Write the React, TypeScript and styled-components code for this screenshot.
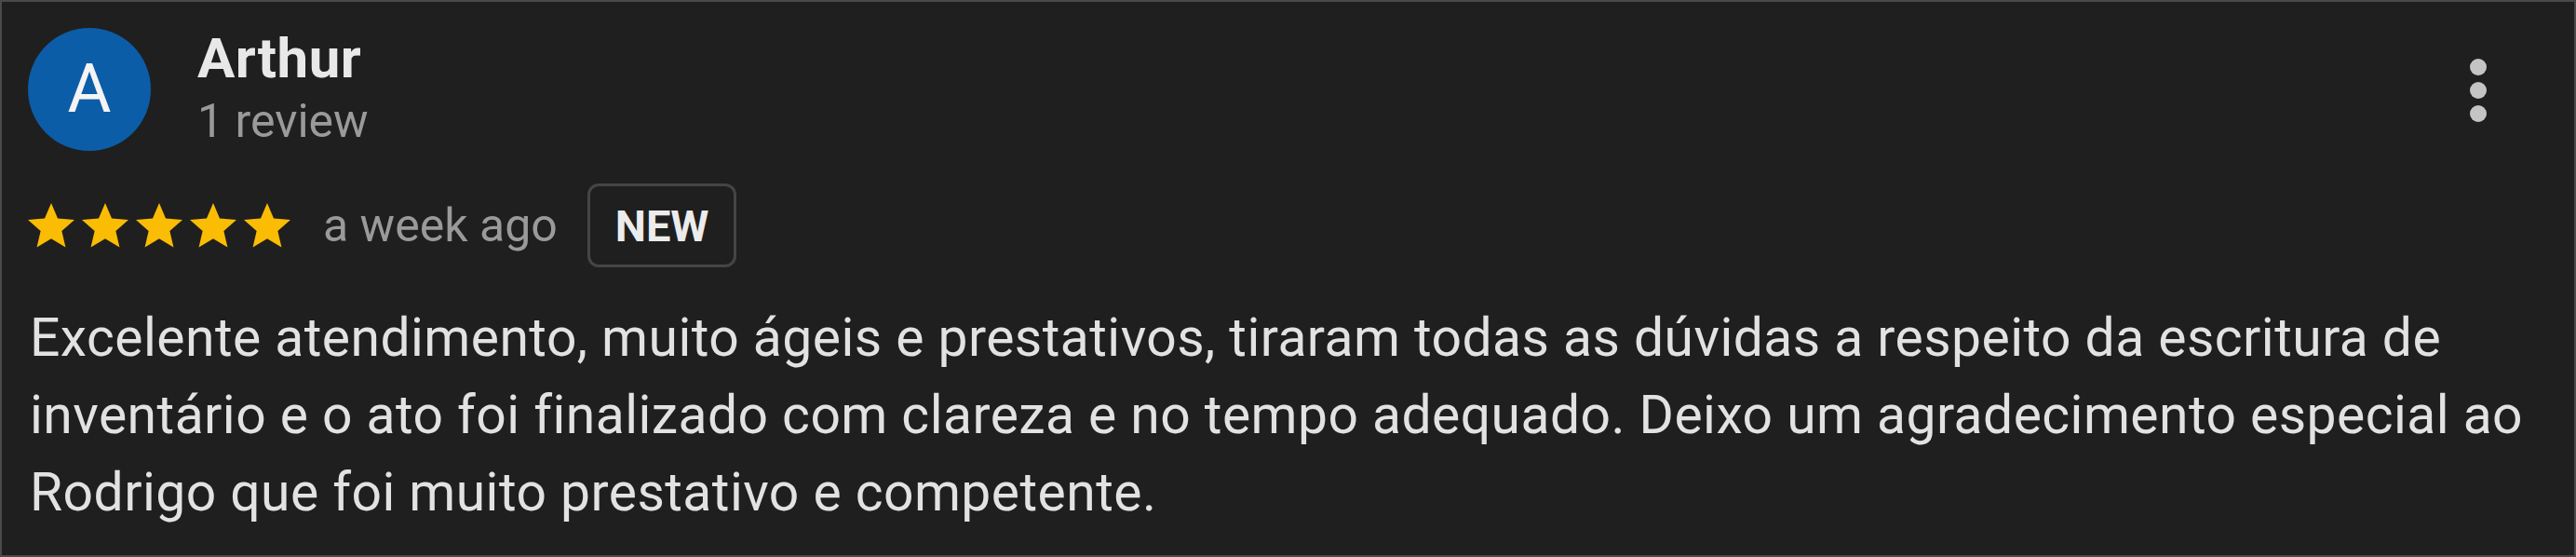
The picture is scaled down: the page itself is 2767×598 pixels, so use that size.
import styled, { createGlobalStyle } from "styled-components";

const GlobalStyle = createGlobalStyle`
  html, body {
    margin: 0;
    padding: 0;
    background: #1f1f1f;
  }
  * {
    box-sizing: border-box;
  }
`;

const review = {
  initial: "A",
  name: "Arthur",
  count: "1 review",
  rating: 5,
  when: "a week ago",
  text: "Excelente atendimento, muito ágeis e prestativos, tiraram todas as dúvidas a respeito da escritura de inventário e o ato foi finalizado com clareza e no tempo adequado. Deixo um agradecimento especial ao Rodrigo que foi muito prestativo e competente.",
};

const Star = () => (
  <svg viewBox="2 2 20 19" width="50" height="47.5">
    <path
      d="M12 17.27L18.18 21l-1.64-7.03L22 9.24l-7.19-.61L12 2 9.19 8.63 2 9.24l5.46 4.73L5.82 21z"
      fill="#fbbc04"
    />
  </svg>
);

const App = () => {
  return (
    <>
      <GlobalStyle />
      <Card>
        <Header>
          <Author>
            <Avatar>{review.initial}</Avatar>
            <Names>
              <h1 className="name">{review.name}</h1>
              <span className="count">{review.count}</span>
            </Names>
          </Author>
          <MenuButton aria-label="More">
            <i />
            <i />
            <i />
          </MenuButton>
        </Header>
        <Meta>
          <Stars>
            {Array.from({ length: review.rating }).map((_, i) => (
              <Star key={i} />
            ))}
          </Stars>
          <span className="when">{review.when}</span>
          <Badge>NEW</Badge>
        </Meta>
        <Body>{review.text}</Body>
      </Card>
    </>
  );
};

export default App;

const Card = styled.div`
  width: 2767px;
  height: 598px;
  background: #1f1f1f;
  border: 2px solid #4a4a4a;
  padding: 28px 40px 0 28px;
  font-family: Roboto, "Liberation Sans", Arial, sans-serif;
  display: flex;
  flex-direction: column;
`;

const Header = styled.div`
  display: flex;
  align-items: flex-start;
  justify-content: space-between;
`;

const Author = styled.div`
  display: flex;
  align-items: flex-start;
  gap: 50px;
`;

const Avatar = styled.div`
  width: 132px;
  height: 132px;
  border-radius: 50%;
  background: #0c5da8;
  color: #f4f4f4;
  display: flex;
  align-items: center;
  justify-content: center;
  font-size: 72px;
  font-weight: 400;
  line-height: 1;
`;

const Names = styled.div`
  display: flex;
  flex-direction: column;
  .name {
    margin: 0;
    font-size: 60px;
    line-height: 66px;
    font-weight: 700;
    letter-spacing: 0.5px;
    color: #e8e8e8;
  }
  .count {
    margin-top: 8px;
    font-size: 50px;
    line-height: 52px;
    color: #9a9a9a;
  }
`;

const MenuButton = styled.button`
  background: none;
  border: none;
  padding: 33px 0 0;
  margin-right: 54px;
  display: flex;
  flex-direction: column;
  align-items: center;
  gap: 7px;
  i {
    width: 18px;
    height: 18px;
    border-radius: 50%;
    background: #c4c4c4;
  }
`;

const Meta = styled.div`
  display: flex;
  align-items: center;
  margin-top: 35px;
  .when {
    margin-left: 35px;
    font-size: 50px;
    line-height: 58px;
    color: #9a9a9a;
  }
`;

const Stars = styled.div`
  display: flex;
  gap: 8px;
  svg {
    display: block;
  }
`;

const Badge = styled.div`
  margin-left: 32px;
  height: 90px;
  padding: 0 27px;
  border: 3px solid #454545;
  border-radius: 12px;
  display: flex;
  align-items: center;
  font-size: 47px;
  font-weight: 700;
  color: #ececec;
`;

const Body = styled.p`
  margin: 34px 0 0;
  padding-left: 2px;
  font-size: 57px;
  line-height: 83px;
  letter-spacing: 0.45px;
  color: #e2e2e2;
`;
